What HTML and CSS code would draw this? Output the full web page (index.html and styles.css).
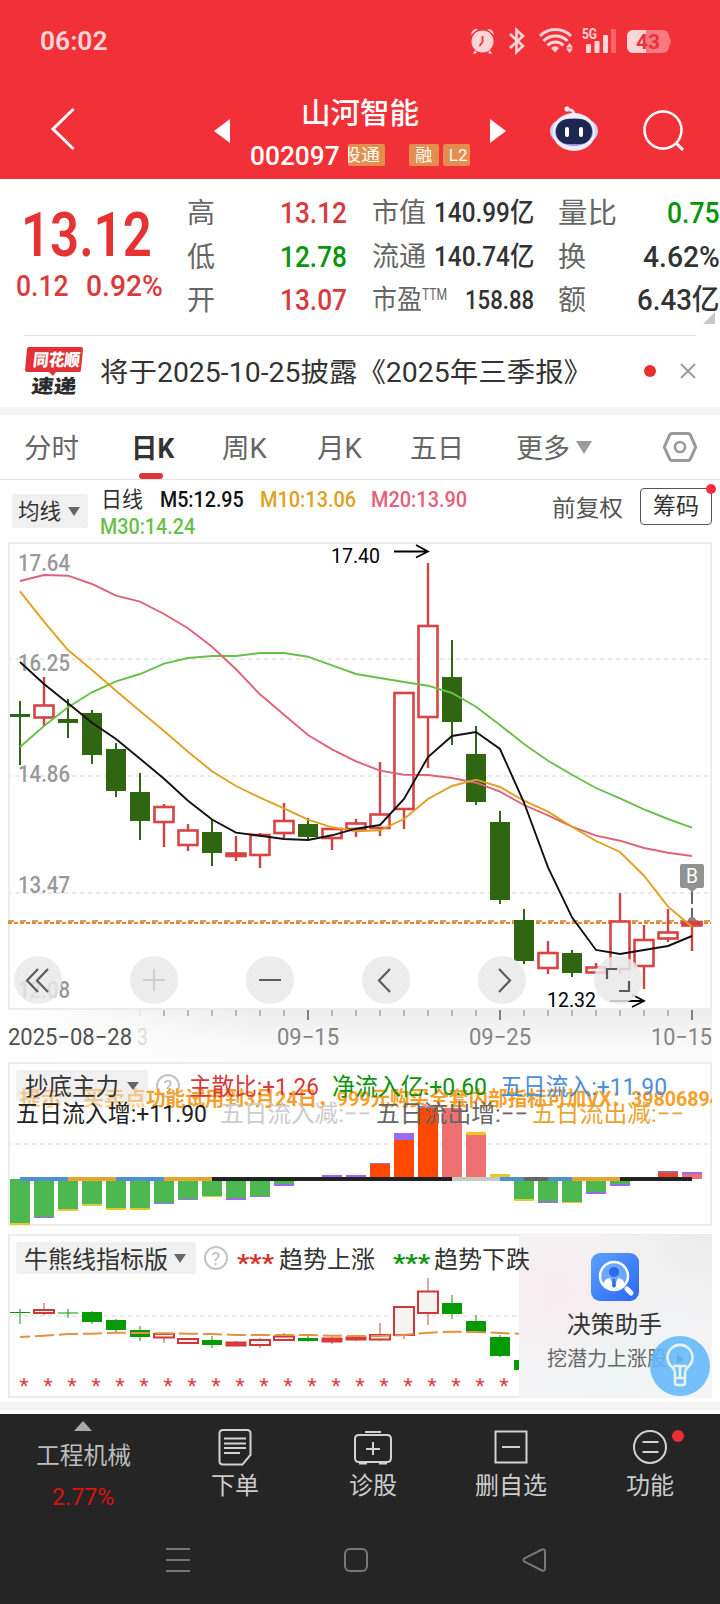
FILE: index.html
```html
<!DOCTYPE html>
<html lang="zh-CN">
<head>
<meta charset="utf-8">
<title>山河智能 002097</title>
<link rel="stylesheet" href="styles.css">
</head>
<body>
<header class="header">
  <div class="status">
    <span class="clock" data-w="68">06:02</span>
    <svg class="status-icons" width="206" height="40" viewBox="468 22 206 40">
      <g fill="#ffd5d7">
        <circle cx="482.500" cy="41.500" r="11"/>
        <path d="M471 35a6 6 0 0 1 7-6zM494 35a6 6 0 0 0-7-6zM475 50l-2 4 4-1zM490 50l2 4-4-1z"/>
        <path d="M555 52.500l-4-4.500a5.500 5.500 0 0 1 8 0zM569.500 43l3.500 4.500h-7zM569.500 53l-3.500-4.500h7z"/>
        <rect x="586" y="44" width="5" height="9" rx="1"/><rect x="594.500" y="41" width="5" height="12" rx="1"/><rect x="603" y="35" width="5" height="18" rx="1"/>
      </g>
      <path d="M482.500 36v6l-3 4" fill="none" stroke="#f23038" stroke-width="1.800"/>
      <path d="M510 34l13 12-6.500 6V30l6.500 6-13 12" fill="none" stroke="#ffd5d7" stroke-width="2.600"/>
      <path d="M540 36a22 22 0 0 1 31 0M543.500 41a17 17 0 0 1 24 0M547.500 45.500a11 11 0 0 1 16 0" fill="none" stroke="#ffd5d7" stroke-width="3"/>
      <rect x="611" y="29" width="5" height="24" fill="#f7656b"/>
      <text x="582" y="39" font-size="14" font-weight="700" fill="#ffd5d7" textLength="15" lengthAdjust="spacingAndGlyphs">5G</text>
      <rect x="627" y="30" width="42" height="23" rx="6" fill="#f9797e"/><path d="M669 37q4 4 0 9z" fill="#f9797e"/>
      <path d="M646 30v23h-13a6 6 0 0 1-6-6V36a6 6 0 0 1 6-6z" fill="#ffd5d7"/>
      <text x="636" y="49" font-size="20" font-weight="700" fill="#e8333b" textLength="24" lengthAdjust="spacingAndGlyphs">43</text>
    </svg>
  </div>
  <div class="titlebar">
    <svg class="back" width="30" height="46" viewBox="48 106 30 46"><path d="M73.500 109L53 129l20.500 20" fill="none" stroke="#fff" stroke-width="3"/></svg>
    <svg class="prev" width="16" height="24"><path d="M16 0v24L0 12z" fill="#fff"/></svg>
    <div class="stock">
      <h1><span data-w="118">山河智能</span></h1>
      <div class="code"><b data-w="90">002097</b><span class="tags"><i class="cut"><span data-w="38">股通</span></i><i class="gap"></i><i class="rong">融</i><i class="l2">L2</i></span></div>
    </div>
    <svg class="next" width="16" height="24"><path d="M0 0v24l16-12z" fill="#fff"/></svg>
    <svg class="robot" width="50" height="48" viewBox="549 105 50 48">
      <circle cx="567" cy="109" r="2.500" fill="#fff"/><path d="M567 110q7-1 7 5" fill="none" stroke="#e8dcf5" stroke-width="3"/>
      <rect x="550" y="120" width="48" height="22" rx="11" fill="#c9ccf5"/>
      <ellipse cx="574" cy="132" rx="21.500" ry="19" fill="#eeeefe"/><ellipse cx="574" cy="132" rx="19" ry="14" fill="#9a8df0"/>
      <rect x="556" y="119" width="36" height="25" rx="12" fill="#1d2850"/>
      <rect x="565" y="127" width="4" height="10" rx="2" fill="#fff"/><rect x="579" y="127" width="4" height="10" rx="2" fill="#fff"/>
    </svg>
    <svg class="search" width="44" height="44" viewBox="642 109 44 44"><circle cx="663" cy="130" r="18.500" fill="none" stroke="#fff" stroke-width="2.500"/><path d="M676 143l7 7" stroke="#fff" stroke-width="3"/></svg>
  </div>
</header>

<section class="quote">
  <div class="price">
    <div class="last red"><span data-w="131">13.12</span></div>
    <div class="change red"><span data-w="53">0.12</span><span data-w="77">0.92%</span></div>
  </div>
  <dl class="col c1">
    <div><dt>高</dt><dd class="red"><span data-w="67">13.12</span></dd></div>
    <div><dt>低</dt><dd class="green"><span data-w="67">12.78</span></dd></div>
    <div><dt>开</dt><dd class="red"><span data-w="67">13.07</span></dd></div>
  </dl>
  <dl class="col c2">
    <div><dt><span data-w="54">市值</span></dt><dd><span data-w="100">140.99亿</span></dd></div>
    <div><dt><span data-w="54">流通</span></dt><dd><span data-w="100">140.74亿</span></dd></div>
    <div><dt><span data-w="50">市盈</span><sup data-w="25">TTM</sup></dt><dd class="pe"><span data-w="69">158.88</span></dd></div>
  </dl>
  <dl class="col c3">
    <div><dt><span data-w="59">量比</span></dt><dd class="green"><span data-w="53">0.75</span></dd></div>
    <div><dt>换</dt><dd><span data-w="77">4.62%</span></dd></div>
    <div><dt>额</dt><dd><span data-w="83">6.43亿</span></dd></div>
  </dl>
  <i class="corner"></i>
</section>

<section class="news">
  <svg width="60" height="52" viewBox="24 345 60 52">
    <path d="M29 347h52q2 0 2 2l-2 21q0 2-2 2H80l-24 0-3 4-4-4H27q-2 0-2-2l2-21q0-2 2-2z" fill="#e23237"/>
    <g transform="translate(4 0) skewX(-6)"><text x="67" y="366" font-size="17" font-weight="900" fill="#fff" textLength="47" lengthAdjust="spacingAndGlyphs">同花顺</text>
    <text x="68" y="393.500" font-size="19" font-weight="900" fill="#2b2b2b" textLength="45">速递</text></g>
  </svg>
  <p><span data-w="492">将于2025-10-25披露《2025年三季报》</span></p>
  <i class="dot"></i>
  <svg class="close" width="16" height="16"><path d="M1 1l14 14M15 1L1 15" stroke="#999" stroke-width="1.800"/></svg>
</section>

<nav class="tabs">
  <a><span data-w="55">分时</span></a><a class="on"><span data-w="43">日K</span></a><a><span data-w="45">周K</span></a><a><span data-w="45">月K</span></a><a><span data-w="54">五日</span></a><a class="more"><span data-w="54">更多</span><i></i></a>
  <svg width="34" height="32" viewBox="663 431 34 32"><path d="M672 433.500h16q1.500 0 2.300 1.500l5 11q.6 1 0 2l-5 11q-.8 1.500-2.300 1.500h-16q-1.500 0-2.300-1.500l-5-11q-.6-1 0-2l5-11q.8-1.500 2.300-1.500z" fill="none" stroke="#999" stroke-width="3"/><circle cx="680" cy="447" r="5" fill="none" stroke="#999" stroke-width="2.600"/></svg>
</nav>

<section class="legend">
  <button class="pick"><span data-w="43">均线</span><i></i></button>
  <p class="mas">
    <span class="k"><span data-w="42">日线</span></span><span class="m5"><span data-w="84">M5:12.95</span></span><span class="m10"><span data-w="96">M10:13.06</span></span><span class="m20"><span data-w="96">M20:13.90</span></span><span class="m30"><span data-w="95">M30:14.24</span></span>
  </p>
  <span class="adj"><span data-w="71">前复权</span></span>
  <button class="chips"><span data-w="46">筹码</span><i></i></button>
</section>

<svg class="chart" id="main" width="720" height="520" viewBox="0 542 720 520">
  <defs>
    <linearGradient id="axis" x1="0" y1="0" x2="0" y2="1"><stop offset="0" stop-color="#ececec"/><stop offset=".6" stop-color="#f8f8f8"/><stop offset="1" stop-color="#fafafa"/></linearGradient>
    <linearGradient id="fade"><stop offset="0" stop-color="#fff"/><stop offset="1" stop-color="#fff" stop-opacity="0"/></linearGradient>
  </defs>
  <rect x="8" y="1010" width="704" height="52" fill="url(#axis)"/><rect x="8" y="1010" width="250" height="52" fill="url(#fade)"/>
  <rect x="9" y="543" width="702" height="466" fill="none" stroke="#ececec" stroke-width="2"/>
  <path d="M8 659H710M8 776H710M8 893H710" class="grid"/>
  <g class="price-axis">
    <text x="18" y="571" textLength="52">17.64</text><text x="18" y="671" textLength="52">16.25</text><text x="18" y="782" textLength="52">14.86</text><text x="18" y="893" textLength="52">13.47</text><text x="18" y="998" textLength="52">12.08</text>
  </g>
  <path d="M8 921H711" stroke="#c9a469" stroke-width="2" stroke-dasharray="6 6"/>
  <path d="M8 923H711" stroke="#ec8430" stroke-width="2" stroke-dasharray="4 2"/>
  <path d="M692 890v14M692 908v12" stroke="#666" stroke-width="2"/><circle cx="692" cy="921" r="4" fill="#888"/>
  <g id="candles"></g><g id="averages"></g>
  <path d="M682 864h20q2 0 2 2v20q0 2-2 2h-5l-5 4-5-4h-5q-2 0-2-2v-20q0-2 2-2z" fill="#929292"/>
  <text x="686" y="883" font-size="20" fill="#fff" textLength="12" lengthAdjust="spacingAndGlyphs">B</text>
  <text class="peak" x="331" y="563" textLength="49">17.40</text>
  <path d="M394 551.500h33M416 545l12 6.500-12 6" fill="none" stroke="#000" stroke-width="1.800"/>
  <text class="peak" x="547" y="1006.500" textLength="49">12.32</text>
  <path d="M610 1001h33M632 994.500l12 6.500-12 6" fill="none" stroke="#000" stroke-width="1.800"/>
  <g fill="#e9e9e9" fill-opacity=".85"><circle cx="38" cy="980" r="24"/><circle cx="154" cy="980" r="24"/><circle cx="270" cy="980" r="24"/><circle cx="386" cy="980" r="24"/><circle cx="502" cy="980" r="24"/><circle cx="618" cy="980" r="24"/></g>
  <g fill="none" stroke="#5c5c5c" stroke-width="2.200">
    <path d="M38 969l-11 11.500L38 992M48 969l-11 11.500L48 992M259 980h22M390 969l-11 11.500L390 992M499 969l11 11.500L499 992"/>
    <path d="M607 979v-10h10M619 991h10v-10"/><path d="M143 980h22M154 969v22" stroke="#d0d0d0"/>
  </g>
  <g id="ticks"></g>
  <g class="dates"><text x="8" y="1045" textLength="124" class="first">2025−08−28</text><text x="137" y="1045" textLength="11" class="ghost">3</text><text x="277" y="1045" textLength="62">09−15</text><text x="469" y="1045" textLength="62">09−25</text><text x="651" y="1045" textLength="61">10−15</text></g>
</svg>

<svg class="chart" id="flow" width="720" height="172" viewBox="0 1062 720 172">
  <rect x="9" y="1063" width="702" height="162" fill="none" stroke="#ececec" stroke-width="2"/>
  <path d="M8 1144H710" class="grid"/>
  <rect x="16" y="1070" width="132" height="32" rx="3" fill="#f0f0f0"/>
  <g id="bars"></g>
  <path d="M127 1082h12l-6 8z" fill="#666"/>
  <circle cx="168" cy="1086" r="11" fill="none" stroke="#c4c4c4" stroke-width="2"/><text x="163.500" y="1093" font-size="18" fill="#bbb">?</text>
  <clipPath id="c1"><rect x="8" y="1062" width="704" height="80"/></clipPath>
  <g class="notice" clip-path="url(#c1)"><text x="20" y="1106" textLength="126" opacity=".5">提示：买卖点</text><text x="146" y="1106" textLength="575">功能试用到3月24日，999元购买全套内部指标可加VX：39806894</text></g>
  <g class="ind">
    <text x="25" y="1095" textLength="94" fill="#333">抄底主力</text>
    <text x="189" y="1095" textLength="130" fill="#d8383c">主散比:+1.26</text>
    <text x="332" y="1095" textLength="155" fill="#0a940a">净流入亿:+0.60</text>
    <text x="500" y="1095" textLength="167" fill="#4a8fdc">五日流入:+11.90</text>
    <text x="16" y="1122" textLength="191" fill="#222">五日流入增:+11.90</text>
    <text x="220" y="1122" textLength="151" fill="#ccc">五日流入减:−−</text>
    <text x="376" y="1122" textLength="152" fill="#666">五日流出增:−−</text>
    <text x="532" y="1122" textLength="152" fill="#e8a532">五日流出减:−−</text>
  </g>
</svg>

<section class="trend">
  <svg class="chart" id="bull" width="720" height="168" viewBox="0 1234 720 168">
    <rect x="9" y="1235" width="702" height="162" fill="none" stroke="#ececec" stroke-width="2"/>
    <path d="M8 1316H519" class="grid"/>
    <g id="mini"></g>
  </svg>
  <aside class="advisor">
    <svg width="48" height="48"><defs><linearGradient id="ib" x1="0" y1="0" x2="1" y2="1"><stop offset="0" stop-color="#5ba0ff"/><stop offset="1" stop-color="#2b68f6"/></linearGradient></defs>
      <rect width="48" height="48" rx="9" fill="url(#ib)"/><circle cx="23" cy="23" r="14" fill="#6ba6ff" stroke="#fff" stroke-width="2.500"/><circle cx="23" cy="19" r="5" fill="#2d6ce0"/><path d="M12 31q2-6 7-6l4 9 4-9q5 0 7 6-5 5-11 5t-11-5z" fill="#fff"/><path d="M22 26h2l1 7-2 2-2-2z" fill="#2d6ce0"/><path d="M36 36l4 4" stroke="#fff" stroke-width="5" stroke-linecap="round"/></svg>
    <strong><span data-w="95">决策助手</span></strong>
    <small><span data-w="120">挖潜力上涨股</span><i></i></small>
  </aside>
  <svg class="chart over" width="720" height="168" viewBox="0 1234 720 168">
    <rect x="16" y="1242" width="180" height="32" rx="3" fill="#f0f0f0"/>
    <path d="M174 1254h12l-6 9z" fill="#666"/>
    <circle cx="216" cy="1258" r="11" fill="none" stroke="#c4c4c4" stroke-width="2"/><text x="211.500" y="1265" font-size="18" fill="#bbb">?</text>
    <g class="ind"><text x="24" y="1268" textLength="144" fill="#333">牛熊线指标版</text>
    <text class="stars" x="237" y="1271" textLength="37" fill="#d93030">***</text><text x="279" y="1268" textLength="96" fill="#333">趋势上涨</text>
    <text class="stars" x="393" y="1271" textLength="37" fill="#0a940a">***</text><text x="434" y="1268" textLength="96" fill="#333">趋势下跌</text></g>
    <circle cx="680" cy="1366" r="30" fill="#61b8fd" fill-opacity=".88"/>
    <path d="M675 1378v-5q0-3-3-6a12.500 12.500 0 1 1 16 0q-3 3-3 6v5zM675 1378v5q0 2 2 2h6q2 0 2-2v-5M673.500 1366h13M680 1366v12" fill="none" stroke="#e9f2e8" stroke-width="2.600"/>
  </svg>
</section>
<div class="band"></div>

<footer class="bottom">
  <div class="actions">
    <div class="sector"><i></i><span><span data-w="95">工程机械</span></span><em><span data-w="62">2.77%</span></em></div>
    <div><svg width="36" height="40" viewBox="217 1427 36 40"><path d="M223 1430h24q3.500 0 3.500 3.500V1455l-8 9.500H223q-3.500 0-3.500-3.500v-27.500q0-3.500 3.500-3.500zM224 1438.500h22M224 1443.500h22M224 1448h22M224 1453h16"/></svg><span>下单</span></div>
    <div><svg width="42" height="40" viewBox="352 1427 42 40"><path d="M359 1435h28q4 0 4 4v19q0 4-4 4h-28q-4 0-4-4v-19q0-4 4-4zM365 1432h16M373 1442v13M366 1449h14M359 1463.500h8M379 1463.500h8"/></svg><span>诊股</span></div>
    <div><svg width="36" height="40" viewBox="493 1427 36 40"><path d="M495.500 1431.500h31v31h-31zM502 1447h18"/></svg><span>删自选</span></div>
    <div class="fn"><svg width="38" height="40" viewBox="631 1427 38 40"><path d="M642.500 1442h16M642.500 1452h16"/><circle cx="650" cy="1447" r="16"/></svg><i></i><span>功能</span></div>
  </div>
  <div class="sysnav">
    <svg width="24" height="24"><path d="M0 1h24M0 12h24M0 23h24"/></svg>
    <svg width="24" height="24"><rect x="1" y="1" width="22" height="22" rx="5"/></svg>
    <svg width="24" height="24"><path d="M20 1.500L3 10q-3 2 0 4l17 8.500q3 1 3-2v-17q0-3-3-2z"/></svg>
  </div>
</footer>
<script src="app.js"></script>
</body>
</html>
```

FILE: styles.css
```css
* { box-sizing: border-box; }
body { margin: 0; width: 720px; height: 1604px; overflow: hidden; background: #fff; color: #333; font-family: Roboto, "Noto Sans CJK SC", sans-serif; }
h1, p, dl, dd { margin: 0; font-weight: 400; }
i, em { font-style: normal; }
svg { display: block; flex: none; }
button { border: 0; padding: 0; font: inherit; color: inherit; flex: none; }
[data-w] { display: inline-block; transform-origin: 0 50%; white-space: nowrap; }
.red { color: #d93a3c; }
.green { color: #0a940a; }

.header { height: 179px; background: #f23038; color: #fff; }
.status { height: 80px; padding: 22px 46px 0 40px; display: flex; justify-content: space-between; }
.clock { font-size: 26px; line-height: 39px; font-weight: 600; color: #ffd5d7; height: 39px; }
.titlebar { height: 99px; display: flex; align-items: flex-start; padding-left: 48px; }
.back { margin-top: 26px; }
.prev { margin: 39px 0 0 136px; }
.stock { width: 260px; padding-top: 14px; }
.stock h1 { font-size: 29px; line-height: 40px; text-align: center; font-weight: 500; height: 40px; }
.code { display: flex; padding-left: 20px; margin-top: 6px; height: 32px; line-height: 32px; }
.code b { font-size: 26px; font-weight: 500; }
.tags { display: flex; margin: 4px 0 0 8px; height: 22px; font-size: 17px; line-height: 22px; }
.tags i { background: #e38e4c; border-radius: 2px; text-align: center; }
.tags .cut { width: 37px; overflow: hidden; text-align: left; }
.tags .cut > span { margin-left: -6px; }
.tags .gap { width: 24px; background: none; }
.rong { width: 30px; margin-right: 4px; }
.l2 { width: 27px; padding-left: 4px; }
.next { margin-top: 39px; }
.robot { margin: 25px 0 0 43px; }
.search { margin: 29px 0 0 43px; }

.quote { height: 157px; position: relative; display: grid; grid-template-columns: 187px 185px 186px 162px; }
.quote::after { content: ""; position: absolute; left: 24px; right: 24px; bottom: 0; height: 1px; background: #e6e6e6; }
.last { font-size: 61px; line-height: 72px; height: 72px; font-weight: 600; padding: 20px 0 0 21px; color: #e53232; }
.change { display: flex; gap: 17px; padding: 18px 0 0 16px; font-size: 29px; line-height: 34px; font-weight: 500; }
.col { padding-top: 13px; font-size: 28px; }
.col > div { display: flex; justify-content: space-between; height: 43.500px; line-height: 43px; }
.c1 { width: 160px; }
.c2 { width: 162px; }
.c3 { width: 162px; }
.col dt { color: #666; white-space: nowrap; display: flex; }
.col dd { font-size: 29px; font-weight: 500; white-space: nowrap; }
.c2 dt, .c2 dd { font-size: 27px; }
.c2 sup { font-size: 16px; line-height: 32px; }
.c2 .pe { font-size: 26px; }
.corner { position: absolute; right: 5px; bottom: 12px; border: 6px solid #c8c8c8; border-top-color: transparent; border-left-color: transparent; }

.news { height: 79px; padding: 9px 24px 0; border-bottom: 8px solid #f4f4f4; display: flex; }
.news p { width: 522px; margin-left: 16px; font-size: 27px; line-height: 56px; height: 52px; }
.dot { width: 12px; height: 12px; border-radius: 50%; background: #e93030; margin: 20px 24px 0 22px; flex: none; }
.close { margin-top: 18px; }

.tabs { height: 65px; border-bottom: 1px solid #e3e3e3; padding-left: 24px; display: grid; grid-template-columns: 107px 91px 95px 93px 106px 147px 34px; font-size: 27px; line-height: 68px; color: #666; }
.tabs > a { height: 64px; }
.tabs svg { margin-top: 16px; }
.on { color: #333; font-weight: 700; position: relative; }
.on::after { content: ""; position: absolute; left: 8px; bottom: 0; width: 24px; height: 6px; border-radius: 3px; background: #e03236; }
.more { display: flex; }
.more i { border: 8px solid transparent; border-top: 13px solid #999; border-bottom: 0; margin: 26px 0 0 6px; height: 13px; }

.legend { height: 62px; display: flex; font-size: 22px; }
.pick { margin: 14px 0 0 12px; width: 76px; height: 34px; padding: 2px 0 0 6px; border-radius: 3px; background: #f0f0f0; display: flex; align-items: center; line-height: 32px; }
.pick i { border: 6px solid transparent; border-top: 9px solid #666; border-bottom: 0; margin: -2px 0 0 7px; }
.mas { width: 452px; flex: none; padding: 6px 0 0 13px; display: flex; flex-wrap: wrap; align-content: flex-start; line-height: 28px; gap: 0 17px; font-weight: 500; }
.mas > span { height: 27px; }
.k { color: #333; font-weight: 400; }
.m5 { color: #111; } .m10 { color: #e0a020; } .m20 { color: #e5607a; } .m30 { color: #6abf4b; }
.mas .m10 { margin-left: -1px; } .mas .m20 { margin-left: -2px; } .mas .m30 { margin-left: -1px; }
.adj { width: 100px; flex: none; padding-left: 12px; font-size: 23px; line-height: 57px; color: #555; }
.chips { position: relative; width: 72px; height: 37px; margin-top: 8px; border: 1.500px solid #555; border-radius: 4px; background: #fff; line-height: 36px; font-size: 23px; text-align: left; padding-left: 12px; }
.chips i { position: absolute; right: -5px; top: -5px; width: 10px; height: 10px; border-radius: 50%; background: #fb2c3e; }

.chart text { font-family: Roboto, "Noto Sans CJK SC", sans-serif; }
.grid { stroke: #eaeaea; stroke-width: 2; stroke-dasharray: 4 4; }
.price-axis text { font-size: 23px; font-weight: 500; fill: #999; }
.peak { font-size: 20px; fill: #000; }
.dates text { font-size: 23px; fill: #858585; }
.dates .first { fill: #505050; }
.dates .ghost { fill: #ddd; }
.notice text { font-size: 20px; font-weight: 700; fill: #f3a02c; }
.ind text { font-size: 24px; }
.ind .stars { font-weight: 700; }

.trend { position: relative; height: 168px; }
.over { position: absolute; left: 0; top: 0; }
.advisor { position: absolute; left: 519px; top: 1px; width: 193px; height: 163px; padding: 18px 0 0 29px; background: radial-gradient(ellipse at 100% 0%, #ebebeb, transparent 45%), radial-gradient(ellipse at 20% 35%, #f6ebee, transparent 55%), radial-gradient(ellipse at 50% 70%, #edf4f4, transparent 60%), #f4f4f6; }
.advisor svg { margin-left: 43px; }
.advisor strong { display: block; font-weight: 400; font-size: 24px; line-height: 32px; margin: 8px 0 0 19px; }
.advisor small { display: flex; font-size: 20px; line-height: 36px; color: #666; margin-left: -1px; }
.advisor small i { border: 5px solid transparent; border-left: 7px solid #666; border-right: 0; margin: 13px 0 0 10px; height: 10px; }
.band { height: 8px; background: #f4f4f4; margin-bottom: 4px; }

.bottom { height: 190px; background: #252525; color: #ccc; }
.actions { height: 134px; display: grid; grid-template-columns: 166px 138px 138px 138px 138px; font-size: 24px; line-height: 34px; }
.actions > div { display: flex; flex-direction: column; align-items: center; padding-top: 13px; gap: 1px; position: relative; }
.actions > div > span { margin-top: 1px; }
.actions svg { fill: none; stroke: #d2d2d2; stroke-width: 2; }
.actions .sector { padding-top: 7px; color: #bdbdbd; }
.sector > i { border: 9px solid transparent; border-bottom: 10px solid #aaa; border-top: 0; }
.actions .sector > span { margin-top: 7px; }
.sector em { color: #dc1010; margin-top: 6px; font-size: 24px; line-height: 34px; }
.actions .fn { left: 1px; }
.fn > i { position: absolute; left: 91px; top: 16px; width: 12px; height: 12px; border-radius: 50%; background: #e93030; }
.sysnav { display: flex; gap: 154px; padding: 0 0 0 166px; }
.sysnav svg { fill: none; stroke: #777; stroke-width: 2; }
```

FILE: app.js
```js
const px = i => 20 + 24 * i;
const html = (id, s) => { document.getElementById(id).innerHTML = s; };

// Candles: colour, high, body top, body bottom, low
const candles = [
  ['g',701,714,717,765],['r',677,705.5,717.5,726],['g',699,719,723,738],['g',710,713,755,764],['g',743,749,791,797],
  ['g',773,792,821,840],['r',804,807,822,847],['r',824,830.5,845,851],['g',820,832,853,866],['r',836,853.5,856,861],
  ['r',833,835,855,868],['r',803,821,833,838],['g',818,824,837,840],['r',828,829,838,850],['r',819,823.5,829,837],
  ['r',762,814.5,828,836],['r',693,693,809,829],['r',563,626,717,768],['g',640,677,722,745],['g',726,754,802,805],
  ['g',811,822,900,904],['g',909,920,961,964],['r',941,953,968,974],['g',950,953,973,977],['r',963,967.5,972.5,973],
  ['r',893,921.5,969,974],['r',925,940,966,989],['r',909,932.5,938.5,942],['r',921,922,925.5,951]
];
html('candles', candles.map(([c, h, t, b, l], i) => {
  const x = px(i);
  if (c === 'g') return `<path d="M${x} ${h}V${l}" stroke="#2f6612" stroke-width="2"/><rect x="${x - 10}" y="${t}" width="20" height="${b - t}" fill="#2f6612"/>`;
  return `<path d="M${x} ${h}V${t}M${x} ${b}V${l}" stroke="#c94444" stroke-width="2.4"/><rect x="${x - 9.5}" y="${t}" width="19" height="${b - t}" fill="${i === 28 ? '#e03838' : '#fff'}" stroke="#d84343" stroke-width="2.6"/>`;
}).join(''));

const averages = {
  '#6abf4b': [747,726,707.3,692.3,681.3,674,663.7,658,656,656,653,653,656.7,665.3,674,678,682,685.7,693,706.7,725,744,760.7,774.7,788,798.3,809.3,819,827.7],
  '#e0627a': [581,575,575.7,584,595.7,601.7,614,628.3,646.7,669.3,694.3,714.7,735,749.3,761.3,770.7,774.7,775,778,782.7,791.7,805,815.3,826.7,835.7,840.7,848,852.7,856],
  '#e0a020': [591.3,621.7,650,670,690.7,711,731,751.7,771.3,786,797.7,808.3,819.7,827.3,831.3,830.3,819,799,786,779.7,787,800.7,811.7,826.7,841,852,875.7,906.7,926.7],
  '#111': [662,684,703.3,722.7,739,758.7,778.7,800.7,819.5,832.7,835.7,839,840,835.3,828.7,825,799,757,736,732,749,802.5,867.3,917.3,950,954,950,946,936]
};
const line = ys => ys.map((y, i) => `${px(i)},${y}`).join(' ');
html('averages', Object.entries(averages).map(([c, ys]) => `<polyline points="${line(ys)}" fill="none" stroke="${c}" stroke-width="1.9"/>`).join(''));

html('ticks', Array.from({ length: 24 }, (_, k) => {
  const i = k + 5, big = (i - 12) % 8 === 0;
  return `<path d="M${px(i)} 1010v${big ? 10 : 6}" stroke="${i === 5 ? '#ddd' : '#808080'}" stroke-width="${big ? 2 : 1}"/>`;
}).join(''));

// Flow bars: index, colour, top, bottom, cap colour, cap top, cap bottom
const G = '#4db84f', Y = '#e5c92c', P = '#9b6cf0', S = '#7690a5', R = '#ff4800', K = '#ee7070';
const bars = [
  [0,G,1179,1223,Y,1223,1225],[1,G,1181,1216,S,1216,1218],[2,G,1181,1209,Y,1209,1211],[3,G,1181,1204.5,Y,1204.5,1206],
  [4,G,1181,1208,Y,1208,1210],[5,G,1181,1208,Y,1208,1210],[6,G,1181,1202,S,1202,1204],[7,G,1181,1198,S,1198,1200],
  [8,G,1181,1196,Y,1196,1197],[9,G,1181,1198,P,1198,1200],[10,G,1181,1196,P,1196,1197],[11,G,1181,1184,P,1184,1186],
  [13,P,1175,1177,P,1175,1177],[14,P,1175,1177,P,1175,1177],[15,R,1164,1177,P,1163,1164],[16,R,1140,1177,P,1133,1140],
  [17,R,1108,1177,P,1106,1108],[18,K,1108,1177,K,1108,1109],[19,K,1135,1177,'#f3c31e',1132,1135],[20,Y,1174,1177,Y,1174,1177],
  [21,G,1181,1199,Y,1199,1201],[22,G,1181,1201,'#8a80bd',1201,1203],[23,G,1181,1202,Y,1202,1203],[24,G,1181,1192,P,1192,1194],
  [25,G,1181,1184,P,1184,1186],[27,'#e8442a',1173,1177,'#aa6895',1171,1173],[28,K,1174,1179,P,1172,1174]
];
const zero = [[20,68,'#4f90d0'],[68,116,'#e5a52e'],[116,164,'#4f90d0'],[164,212,'#e5a52e'],[212,452,'#222'],[452,500,'#c8c8c8'],[500,524,'#4f90d0'],[524,548,'#666'],[548,572,'#4f90d0'],[572,620,'#e5a52e'],[620,692,'#222']];
html('bars', bars.map(([i, c, t, b, cc, ct, cb]) =>
  `<rect x="${px(i) - 10}" y="${t}" width="20" height="${b - t}" fill="${c}"/><rect x="${px(i) - 10}" y="${ct}" width="20" height="${cb - ct}" fill="${cc}"/>`).join('') +
  zero.map(([a, b, c]) => `<rect x="${a}" y="1177" width="${b - a}" height="4" fill="${c}"/>`).join(''));

const mini = [
  ['g',1309,1312,1313,1324],['r',1303,1310,1313,1315],['g',1309,1312.5,1313.5,1318],['g',1311,1312,1322,1324],['g',1319,1320,1330,1332],
  ['g',1326,1330,1337,1341],['r',1333,1334,1337.5,1343],['r',1338,1339,1343,1344],['g',1336,1340,1345,1348],['s',1341,1342,1346,1346],
  ['r',1338,1340,1345,1348],['r',1333,1336.5,1340,1341],['g',1335,1338,1341,1342],['s',1337,1338,1342,1344],['s',1336,1337,1340,1341],
  ['r',1323,1335,1339.5,1341],['r',1307,1307,1335,1339],['r',1278,1291.5,1313,1325],['g',1295,1303,1314,1319],['g',1315,1321,1332.5,1333],
  ['g',1335,1337,1356,1357],['g',1360,1360,1370,1370]
];
const ma = [1337,1335.7,1334,1333.7,1332.7,1333,1333.3,1333.7,1334,1335,1335,1335,1335,1335.7,1336,1336,1335,1332.7,1331.7,1332,1333,1334];
html('mini', mini.map(([c, h, t, b, l], i) => {
  const x = px(i);
  if (c === 'g') return `<path d="M${x} ${h}V${l}" stroke="#6bb96b" stroke-width="1.6"/><rect x="${x - 10}" y="${t}" width="20" height="${b - t}" fill="#079a07"/>`;
  return `<path d="M${x} ${h}V${t}M${x} ${b}V${l}" stroke="#dc8c8c" stroke-width="1.6"/><rect x="${x - 10}" y="${t}" width="20" height="${b - t}" fill="${c === 's' ? '#e03838' : '#f6f3f3'}" stroke="#d03838" stroke-width="${c === 's' ? 1 : 2}"/>`;
}).join('') + `<polyline points="${line(ma)}" fill="none" stroke="#e39142" stroke-width="2" stroke-dasharray="19 5" stroke-dashoffset="9"/>` +
  Array.from({ length: 21 }, (_, i) => `<text x="${px(i) + 4}" y="1393" font-size="21" fill="#d84040" text-anchor="middle">*</text>`).join(''));

document.querySelectorAll('svg [textLength]').forEach(t => t.setAttribute('lengthAdjust', 'spacingAndGlyphs'));
document.querySelectorAll('[data-w]').forEach(el => {
  const w = el.offsetWidth, target = +el.dataset.w;
  el.style.transform = `scaleX(${target / w})`;
  el.style.marginRight = `${target - w}px`;
});
```
